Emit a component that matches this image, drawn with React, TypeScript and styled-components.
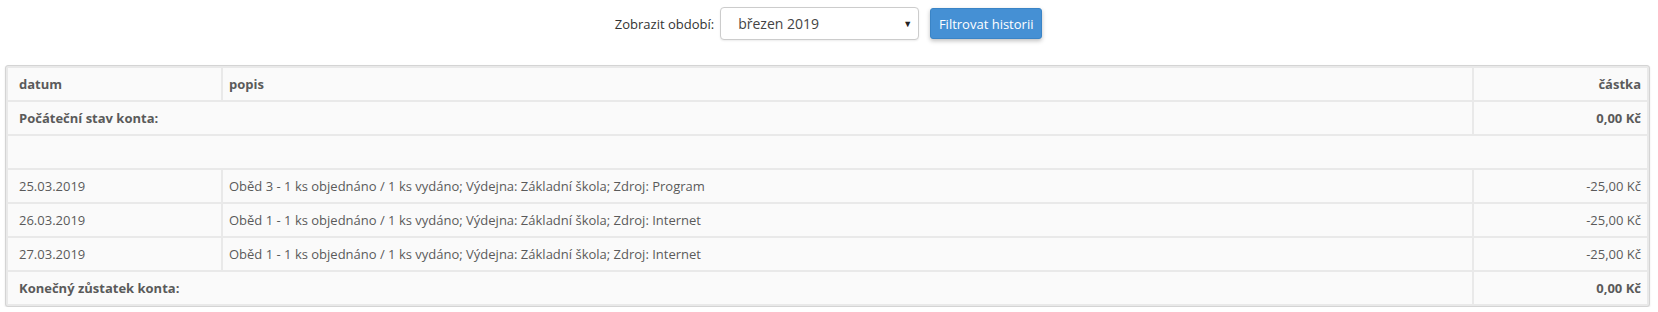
import React from "react";
import styled, { createGlobalStyle } from "styled-components";

type Row = { date: string; text: string; amount: string };

const rows: Row[] = [
	{ date: "25.03.2019", text: "Oběd 3 - 1 ks objednáno / 1 ks vydáno; Výdejna: Základní škola; Zdroj: Program", amount: "-25,00 Kč" },
	{ date: "26.03.2019", text: "Oběd 1 - 1 ks objednáno / 1 ks vydáno; Výdejna: Základní škola; Zdroj: Internet", amount: "-25,00 Kč" },
	{ date: "27.03.2019", text: "Oběd 1 - 1 ks objednáno / 1 ks vydáno; Výdejna: Základní škola; Zdroj: Internet", amount: "-25,00 Kč" },
];

const App: React.FC = () => {
	return (
		<Page>
			<GlobalStyle />
			<FilterBar>
				<FilterLabel>Zobrazit období:</FilterLabel>
				<Select>
					<span>březen 2019</span>
					<Arrow>▼</Arrow>
				</Select>
				<Button>Filtrovat historii</Button>
			</FilterBar>
			<Table>
				<colgroup>
					<col style={{ width: 213 }} />
					<col />
					<col style={{ width: 173 }} />
				</colgroup>
				<thead>
					<tr>
						<Th>datum</Th>
						<Th>popis</Th>
						<Th $right>částka</Th>
					</tr>
				</thead>
				<tbody>
					<tr>
						<Td colSpan={2} $bold>
							Počáteční stav konta:
						</Td>
						<Td $right $bold>
							0,00 Kč
						</Td>
					</tr>
					<tr>
						<Td colSpan={3}>&nbsp;</Td>
					</tr>
					{rows.map((r) => (
						<tr key={r.date}>
							<Td>{r.date}</Td>
							<Td>{r.text}</Td>
							<Td $right>{r.amount}</Td>
						</tr>
					))}
					<tr>
						<Td colSpan={2} $bold>
							Konečný zůstatek konta:
						</Td>
						<Td $right $bold>
							0,00 Kč
						</Td>
					</tr>
				</tbody>
			</Table>
		</Page>
	);
};

const GlobalStyle = createGlobalStyle`
	body {
		margin: 0;
		background: #fff;
		font-family: "Open Sans", "Liberation Sans", sans-serif;
	}
`;

const Page = styled.div`
	padding: 7px 8px 0 5px;
`;

const FilterBar = styled.div`
	display: flex;
	justify-content: center;
	align-items: center;
	gap: 6px;
	height: 33px;
	margin-bottom: 25px;
	padding-left: 2px;
`;

const FilterLabel = styled.label`
	font-size: 13px;
	color: #333;
`;

const Select = styled.div`
	box-sizing: border-box;
	width: 199px;
	height: 33px;
	display: flex;
	align-items: center;
	justify-content: space-between;
	padding: 0 6px 0 17px;
	border: 1px solid #ccc;
	border-radius: 4px;
	background: #fff;
	box-shadow: 0 1px 2px rgba(0, 0, 0, 0.08);
	font-size: 14px;
	color: #444;
	margin-right: 5px;
`;

const Arrow = styled.span`
	font-size: 9px;
	color: #222;
`;

const Button = styled.button`
	box-sizing: border-box;
	width: 112px;
	height: 31px;
	border: 1px solid #3a84c6;
	border-radius: 3px;
	background: #4590d4;
	color: #fff;
	font-family: inherit;
	font-size: 13px;
	box-shadow: 0 2px 4px rgba(0, 0, 0, 0.25);
	padding: 0;
`;

const Table = styled.table`
	width: 100%;
	table-layout: fixed;
	border-collapse: separate;
	border-spacing: 2px;
	background: #e9e9e9;
	border: 1px solid #d4d4d4;
	border-radius: 3px;
	box-shadow: 0 1px 2px rgba(0, 0, 0, 0.1);
	font-size: 13px;
	color: #5a5a5a;

	tr > :first-child {
		padding-left: 11px;
	}
`;

const Th = styled.th<{ $right?: boolean }>`
	height: 32px;
	box-sizing: border-box;
	padding: 0 6px;
	background: #fafafa;
	font-weight: 700;
	text-align: ${(p) => (p.$right ? "right" : "left")};
`;

const Td = styled.td<{ $right?: boolean; $bold?: boolean }>`
	height: 32px;
	box-sizing: border-box;
	padding: 0 6px;
	background: #fafafa;
	font-weight: ${(p) => (p.$bold ? 700 : 400)};
	text-align: ${(p) => (p.$right ? "right" : "left")};
	white-space: nowrap;
`;

export default App;
